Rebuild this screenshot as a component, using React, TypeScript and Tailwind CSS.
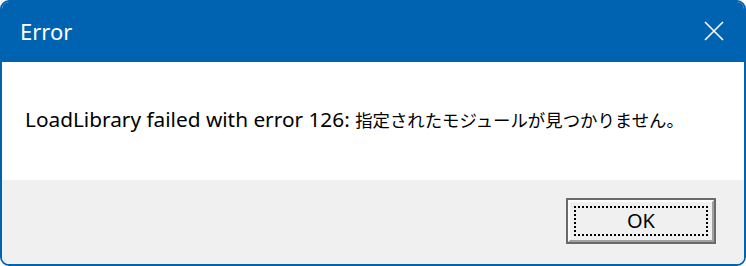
import React from "react";

export default function App() {
  return (
    <div className="w-[746px] h-[266px] bg-white">
      <div className="w-[746px] h-[266px] flex flex-col border-2 border-[#0063b1] rounded-[9px] overflow-hidden bg-white">
        <div className="h-[60px] shrink-0 bg-[#0063b1] flex items-center justify-between pl-[18px] pr-[20px]">
          <span
            className="text-white text-[22px] leading-none -mt-[3px]"
            style={{ fontFamily: '"Noto Sans", "Noto Sans CJK JP", sans-serif' }}
          >
            Error
          </span>
          <svg width="20" height="20" viewBox="0 0 20 20" className="-mt-[2px]">
            <path d="M1 1 L19 19 M19 1 L1 19" stroke="white" strokeWidth="1.6" fill="none" />
          </svg>
        </div>
        <div className="h-[118px] shrink-0 bg-white flex items-center pl-[23px] pb-[4px]">
          <span
            className="text-black text-[20.8px] leading-none whitespace-nowrap"
            style={{ fontFamily: '"Noto Sans", "Noto Sans CJK JP", sans-serif' }}
          >
            LoadLibrary failed with error 126:{" "}
            <span className="text-[17.4px]" style={{ fontFamily: '"Noto Sans CJK JP", sans-serif' }}>
              指定されたモジュールが見つかりません。
            </span>
          </span>
        </div>
        <div className="flex-1 bg-[#f0f0f0] flex justify-end items-start pt-[18px] pr-[28px]">
          <div className="w-[150px] h-[46px] border-2 border-[#6a6a6a] bg-[#f0f0f0]">
            <div className="w-full h-full border-2 border-t-white border-l-white border-r-[#a0a0a0] border-b-[#a0a0a0] p-[4px]">
              <div className="w-full h-full border-2 border-dotted border-black flex items-center justify-center">
                <span
                  className="text-black text-[20px] leading-none"
                  style={{ fontFamily: '"Noto Sans", sans-serif' }}
                >
                  OK
                </span>
              </div>
            </div>
          </div>
        </div>
      </div>
    </div>
  );
}
